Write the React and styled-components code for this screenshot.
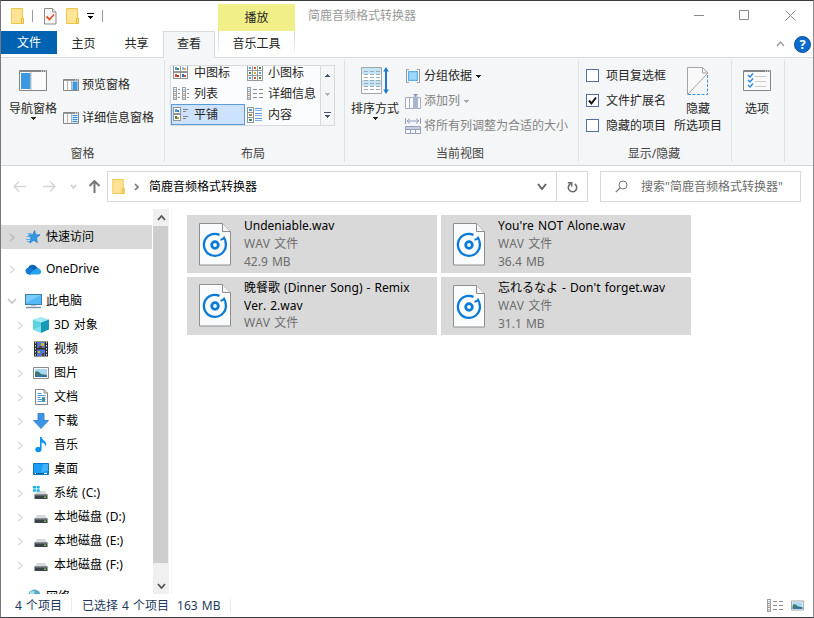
import React from "react";
import styled, { createGlobalStyle } from "styled-components";

const GlobalStyle = createGlobalStyle`
  * {
    box-sizing: border-box;
  }
  body {
    margin: 0;
    overflow: hidden;
    font-family: "Noto Sans", "Noto Sans CJK SC", sans-serif;
    font-size: 12px;
    line-height: 16px;
    font-kerning: none;
    word-spacing: 1px;
    color: #000;
  }
  svg {
    display: block;
    flex: none;
  }
`;

const Window = styled.div`
  display: flex;
  flex-direction: column;
  width: 814px;
  height: 618px;
  background: #fff;
  border: 1px solid;
  border-color: #3c3c42 #8c8c90 #3a3d42 #77787c;
  white-space: nowrap;
`;

/* ---------- header ---------- */

const Header = styled.div`
  display: flex;
  height: 57px;
  flex: none;
  border-bottom: 1px solid #dadbdc;
  background: #fff;
`;

const HeaderLeft = styled.div`
  width: 217px;
`;

const QuickAccess = styled.div`
  display: flex;
  align-items: center;
  height: 30px;
  padding-left: 10px;
`;

const QuickDivider = styled.div`
  width: 1px;
  height: 12px;
  background: #9b9b9b;
  margin: 0 ${(props) => props.$right}px 0 ${(props) => props.$left}px;
`;

const Gap = styled.div`
  width: ${(props) => props.$w}px;
  flex: none;
`;

const Tabs = styled.div`
  display: flex;
`;

const FileTab = styled.div`
  width: 56px;
  height: 23px;
  background: #0063b1;
  color: #fff;
  text-align: center;
  line-height: 23px;
`;

const Tab = styled.div`
  width: 53px;
  height: 26px;
  line-height: 26px;
  text-align: center;
  color: #262626;
`;

const ActiveTab = styled(Tab)`
  width: 52px;
  height: 27px;
  line-height: 24px;
  background: #f5f6f7;
  border: 1px solid #dadbdc;
  border-bottom: none;
`;

const ContextTab = styled.div`
  width: 77px;
  padding-top: 3px;
  text-align: center;
  color: #262626;
`;

const ContextTitle = styled.div`
  height: 27px;
  line-height: 28px;
  background: #f1ef87;
`;

const ContextName = styled.div`
  height: 21px;
  line-height: 26px;
  border: 1px solid;
  border-width: 0 1px;
  border-image: linear-gradient(#d0d0d0, #f4f4f4) 1;
`;

const HeaderRight = styled.div`
  flex: 1;
`;

const TitleRow = styled.div`
  display: flex;
  align-items: center;
  height: 29px;
  padding-left: 13px;
  padding-right: 17px;
  color: #999;
`;

const Controls = styled.div`
  display: flex;
  gap: 35px;
  margin-left: auto;
`;

const HelpRow = styled.div`
  display: flex;
  justify-content: flex-end;
  align-items: center;
  gap: 9px;
  height: 28px;
  padding-right: 2px;
`;

const Help = styled.div`
  width: 17px;
  height: 17px;
  border-radius: 50%;
  border: 1px solid #14508c;
  background: #0a6cce;
  color: #fff;
  font-weight: 700;
  font-size: 13px;
  line-height: 15px;
  text-align: center;
`;

/* ---------- ribbon ---------- */

const Ribbon = styled.div`
  display: flex;
  flex: none;
  height: 108px;
  padding: 2px 0 3px;
  background: #f5f6f7;
  border-bottom: 1px solid #d5d6d7;
`;

const Group = styled.div`
  display: flex;
  flex-direction: column;
  width: ${(props) => props.$w}px;
  border-right: 1px solid #e1e2e3;
`;

const GroupBody = styled.div`
  display: flex;
  flex: none;
  height: 86px;
  padding-left: ${(props) => props.$left}px;
`;

const GroupLabel = styled.div`
  text-align: center;
  color: #444;
  padding-right: ${(props) => props.$shift || 0}px;
`;

const BigButton = styled.div`
  display: flex;
  flex-direction: column;
  align-items: center;
  width: 48px;
  padding-top: 6px;
  color: #262626;
`;

const BigIcon = styled.div`
  display: flex;
  align-items: center;
  height: 29px;
  margin-bottom: 5px;
`;

const BigLabel = styled.div`
  line-height: 17px;
  text-align: center;
`;

const Stack = styled.div`
  display: flex;
  flex-direction: column;
  gap: ${(props) => props.$gap}px;
  padding-top: ${(props) => props.$top}px;
  margin-left: ${(props) => props.$left || 0}px;
`;

const SmallButton = styled.div`
  display: flex;
  align-items: center;
  gap: ${(props) => props.$gap || 3}px;
  height: 20px;
  color: ${(props) => (props.$disabled ? "#838383" : "#262626")};
`;

const CheckRow = styled.div`
  display: flex;
  align-items: center;
  gap: 7px;
  height: 20px;
  color: #262626;
`;

const Box = styled.div`
  width: 13px;
  height: 13px;
  margin-bottom: 1px;
  background: #fff;
  border: 1px solid #4f6fa5;
`;

const Gallery = styled.div`
  display: flex;
  width: 165px;
  height: 61px;
  margin-top: 5px;
  border: 1px solid #d9dadb;
  background: #fbfcfd;
  overflow: hidden;
`;

const GalleryGrid = styled.div`
  display: grid;
  grid-template-columns: 74px 75px;
  grid-auto-rows: 21px;
  margin-top: -4px;
  width: 149px;
`;

const GalleryItem = styled.div`
  display: flex;
  align-items: center;
  gap: 5px;
  padding-left: ${(props) => (props.$selected ? 1 : 2)}px;
  color: #262626;
  ${(props) =>
    props.$selected &&
    `
    background: #cde2fc;
    border: 1px solid #5a9bdc;
  `}
`;

const GalleryIcon = styled.div`
  width: 16px;
`;

const GalleryScroll = styled.div`
  display: flex;
  flex-direction: column;
  justify-content: space-between;
  align-items: center;
  width: 14px;
  padding: 8px 0 7px;
  border-left: 1px solid #d9dadb;
  background: #f5f6f7;
`;

/* ---------- address bar ---------- */

const NavBar = styled.div`
  display: flex;
  flex: none;
  height: 43px;
  padding: 5px 12px 7px 12px;
`;

const NavButtons = styled.div`
  display: flex;
  align-items: center;
  width: 94px;
`;

const Address = styled.div`
  display: flex;
  align-items: center;
  width: 450px;
  border: 1px solid #d9d9d9;
  padding: 0 9px 0 4px;
`;

const Refresh = styled.div`
  display: flex;
  align-items: center;
  justify-content: center;
  width: 31px;
  border: 1px solid #d9d9d9;
  border-left: none;
`;

const Search = styled.div`
  display: flex;
  align-items: center;
  gap: 13px;
  width: 201px;
  margin-left: 12px;
  padding-left: 14px;
  border: 1px solid #d9d9d9;
  color: #6d6d6d;
`;

/* ---------- body ---------- */

const Body = styled.div`
  display: flex;
  height: 385px;
  flex: none;
`;

const Tree = styled.div`
  width: 152px;
  height: 385px;
  padding-top: 16px;
  overflow: hidden;
`;

const TreeRow = styled.div`
  display: flex;
  align-items: center;
  width: 151px;
  height: 24px;
  margin-bottom: ${(props) => (props.$root ? 8 : 0)}px;
  margin-top: ${(props) => (props.$last ? 8 : 0)}px;
  padding-left: ${(props) => (props.$child ? 14 : 6)}px;
  background: ${(props) => (props.$selected ? "#d9d9d9" : "transparent")};
`;

const TreeIcon = styled.div`
  display: flex;
  justify-content: center;
  align-items: center;
  width: 16px;
  height: 18px;
  margin: 0 5px 0 8px;
`;

const ScrollBar = styled.div`
  width: 16px;
  background: #f0f0f0;
  display: flex;
  flex-direction: column;
  align-items: center;
  padding: 6px 0 5px;
`;

const Thumb = styled.div`
  width: 15px;
  height: 337px;
  margin: 5px 1px auto 0;
  background: #cdcdcd;
`;

const Files = styled.div`
  flex: 1;
  display: grid;
  grid-template-columns: 250px 250px;
  grid-auto-rows: 58px;
  gap: 4px;
  margin-left: 2px;
  padding: 6px 0 0 15px;
  border-left: 1px solid #f3f3f3;
`;

const Tile = styled.div`
  display: flex;
  gap: 13px;
  padding-left: 12px;
  background: #d9d9d9;
`;

const TileIcon = styled.div`
  padding-top: ${(props) => props.$top}px;
`;

const TileText = styled.div`
  width: 182px;
  padding-top: 2px;
  line-height: 18px;
  color: #6d6d6d;
  white-space: normal;
`;

const FileName = styled.div`
  color: #000;
  line-height: 17.500px;
`;

const Status = styled.div`
  display: flex;
  align-items: center;
  flex: 1;
  padding: 0 9px 0 14px;
  color: #1e395b;
`;

const StatusDivider = styled.div`
  width: 1px;
  height: 14px;
  background: #ececec;
  margin: 0 10px 0 9px;
`;

const StatusIcons = styled.div`
  display: flex;
  align-items: center;
  gap: 8px;
  margin-left: auto;
`;

/* ---------- icons ---------- */

const Folder = ({ w = 13, h = 17 }) => (
  <svg width={w} height={h} viewBox="0 0 13 17">
    <path d="M.5.5h11v9.500h1v5h-1.500v.5H.5z" fill="#ffe394" stroke="#eec64c" />
    <path d="M10.500 15.500v-5h2v5z" fill="#ffe394" stroke="#e8ba36" />
  </svg>
);

const CheckDoc = () => (
  <svg width="13" height="17" viewBox="0 0 13 17">
    <path d="M.5.5h8l3.500 3.500v12H.5z" fill="#f7f7f7" stroke="#8a8a8a" />
    <path d="M8.500.5v3.500h3.500" fill="#ddd" stroke="#9a9a9a" />
    <path d="M2.500 8.500l3 3 4.500-5" fill="none" stroke="#e5532a" strokeWidth="1.800" />
  </svg>
);

const Down = ({ color = "#222", line }) => (
  <svg width="7" height={line ? 6 : 3} viewBox={line ? "0 -3 7 6" : "0 0 7 3"} shapeRendering="crispEdges">
    {line && <path d="M0-3h7v1H0z" fill={color} />}
    <path d="M1 0h5v1H5v1H4v1H3V2H2V1H1z" fill={color} />
  </svg>
);

const Up = ({ color }) => (
  <svg width="5" height="3" viewBox="0 0 5 3" shapeRendering="crispEdges">
    <path d="M2 0h1v1h1v1h1v1H0V2h1V1h1z" fill={color} />
  </svg>
);

const Chevron = ({ w, h, color, dir = "right", sw = 1.6 }) => {
  const d = {
    right: `M1 1L${w - 1} ${h / 2}L1 ${h - 1}`,
    down: `M1 1L${w / 2} ${h - 1}L${w - 1} 1`,
    up: `M1 ${h - 1}L${w / 2} 1L${w - 1} ${h - 1}`,
  }[dir];
  return (
    <svg width={w} height={h}>
      <path d={d} fill="none" stroke={color} strokeWidth={sw} />
    </svg>
  );
};

const NavPane = () => (
  <svg width="28" height="21" viewBox="0 0 28 21">
    <path d="M.5.5h27v20H.5z" fill="#fafafa" stroke="#858585" />
    <path d="M1 1h26v1H1z" fill="#858585" />
    <path d="M22 1h1M24 1h1M26 1h1" stroke="#fff" />
    <path d="M2 3h9.500v16H2z" fill="#3c98e0" />
    <path d="M12 2v18" stroke="#9a9a9a" strokeWidth=".6" />
  </svg>
);

const SidePane = ({ lines }) => (
  <svg width="16" height="12" viewBox="0 0 16 12">
    <path d="M.5.5h15v11H.5z" fill="#fafafa" stroke="#858585" />
    <path d="M1 1h14v.8H1z" fill="#858585" />
    <path d="M12 1h1M14 1h1" stroke="#fff" />
    <path d="M4.500 2v9M8.500 2v9" stroke="#b5b5b5" />
    <path d="M9.500 2.500h5V11h-5z" fill={lines ? "#cfe6fa" : "#3c98e0"} />
    {lines && <path d="M9.500 3.500h5M9.500 5.500h5M9.500 7.500h5M9.500 9.500h5" stroke="#3c8fdc" />}
  </svg>
);

const cell = (x, y, c1, c2) => (
  <g key={`${x}-${y}`}>
    <rect x={x + 0.5} y={y + 0.5} width="7" height="6" fill="#fff" stroke="#949494" />
    <rect x={x + 2} y={y + 2} width="2" height="3" fill={c1} />
    <rect x={x + 4} y={y + 3} width="2" height="2" fill={c2} />
  </g>
);

const MediumIcons = () => (
  <svg width="15" height="15" viewBox="0 0 15 15">
    {cell(0, 0, "#4d9de0", "#3f7f4a")}
    {cell(7, 0, "#8fb8e0", "#e0ab3a")}
    {cell(0, 7, "#d9502f", "#a13a2a")}
    {cell(7, 7, "#2a6fc0", "#d0453a")}
  </svg>
);

const dots = ["#4d9de0", "#d9502f", "#3f8f4a", "#e0ab3a"];

const SmallIcons = () => (
  <svg width="16" height="16" viewBox="0 0 16 16">
    {[0, 5, 10].map((y, j) =>
      [0, 5, 10].map((x, i) => (
        <g key={`${x}-${y}`}>
          <rect x={x + 0.5} y={y + 0.5} width="5" height="5" fill="#fff" stroke="#9a9a9a" />
          <rect x={x + 2} y={y + 2} width="2" height="2" fill={dots[(i + j * 2) % 4]} />
        </g>
      ))
    )}
  </svg>
);

const ListColumn = ({ x, long }) => (
  <g>
    {[0, 4, 8].map((y, i) => (
      <g key={y}>
        <rect x={x + 0.5} y={y + 0.5} width="3" height="4" fill="#fff" stroke="#a0a0a0" />
        <rect x={x + 1.5} y={y + 2} width="1" height="1.500" fill={dots[i]} />
        <path
          d={long ? `M6 ${y + 2.5}h4M12 ${y + 2.5}h4` : `M${x + 5} ${y + 2.5}h2`}
          stroke="#8a8a8a"
        />
      </g>
    ))}
  </g>
);

const ListIcon = () => (
  <svg width="16" height="13" viewBox="0 0 16 13">
    <ListColumn x={0} />
    <ListColumn x={9} />
  </svg>
);

const DetailsIcon = () => (
  <svg width="16" height="13" viewBox="0 0 16 13">
    <ListColumn x={0} long />
  </svg>
);

const TilesIcon = () => (
  <svg width="16" height="15" viewBox="0 0 16 15">
    {cell(0, 0, "#4d9de0", "#2f7fc4")}
    {cell(0, 7, "#3f8f4a", "#e08a3a")}
    <path d="M10 2.500h5M10 4.500h3M10 9.500h5M10 11.500h3" stroke="#858585" />
  </svg>
);

const ContentIcon = () => (
  <svg width="16" height="16" viewBox="0 0 16 16">
    {[0, 5, 10].map((y, i) => (
      <g key={y}>
        <rect x=".5" y={y + 0.5} width="6" height="5" fill="#fff" stroke="#949494" />
        <rect x="2" y={y + 2} width="3" height="2" fill={["#4d9de0", "#a08a3a", "#3f8f6a"][i]} />
      </g>
    ))}
    <path d="M8 1.500h7M8 6.500h7M8 11.500h7" stroke="#5d9bf0" />
    <path d="M8 3.500h7M8 8.500h7M8 13.500h7" stroke="#85aef0" />
  </svg>
);

const SortIcon = () => (
  <svg width="28" height="28" viewBox="0 0 28 28">
    <path d="M.5.5h20v26H.5z" fill="#fff" stroke="#a5a5a5" />
    <path d="M1 1h19v6H1zM1 13h19v6H1z" fill="#c3e5f8" />
    {[4, 7, 10, 13, 16, 19, 22].map((y) => (
      <path key={y} d={`M3 ${y + 0.5}h4M9 ${y + 0.5}h4M15 ${y + 0.5}h4`} stroke="#a3a9ad" />
    ))}
    <path d="M25 2v23" stroke="#1f7ac8" strokeWidth="2" />
    <path d="M22.200 4.500L25 0l2.800 4.500zM22.200 22.500L25 27l2.800-4.500z" fill="#1f7ac8" />
  </svg>
);

const GroupIcon = () => (
  <svg width="16" height="14" viewBox="0 0 16 14">
    <path d="M4 .5H1.500v13H4M12 .5h2.500v13H12" fill="none" stroke="#9b9b9b" />
    <rect x="3.500" y="2.500" width="9" height="9" fill="#8ccdf5" stroke="#5db1ea" />
    <rect x="5" y="4" width="6" height="6" fill="#9fd8fa" />
  </svg>
);

const AddColumnIcon = () => (
  <svg width="16" height="15" viewBox="0 0 16 15">
    <path d="M.5 3.500h15v11H.5z" fill="#fafcff" stroke="#a3abc3" />
    <path d="M4.500 3.500v11" stroke="#a3abc3" />
    <path d="M8 2.500h5V15H8z" fill="#a9b4cf" />
    <path d="M8 0h5l-2.500 3z" fill="#8996b8" />
  </svg>
);

const FitIcon = () => (
  <svg width="16" height="16" viewBox="0 0 16 16">
    <path d="M.5 0v6M15.500 0v6M2 3h12M5 .5L2 3l3 2.500M11 .5L14 3l-3 2.500" fill="none" stroke="#929cba" />
    <path d="M1 9h14v2H1z" fill="#c5cee3" />
    <path d="M.5 8.500h15v7H.5zM5.500 11.500v4M10.500 11.500v4M.5 11.500h15" fill="none" stroke="#98a2be" />
  </svg>
);

const HideIcon = () => (
  <svg width="22" height="28" viewBox="0 0 22 28">
    <path d="M.5 27.500V.5h15l6 6z" fill="#f9f9f9" />
    <path d="M.5 27.500V.5h15l5.500 5.500L.5 27.500M15.500.5V6H21" fill="none" stroke="#a3a3a3" />
    <path d="M20.500 8v19.500H1" fill="none" stroke="#3d95e0" strokeDasharray="3 1.500" />
  </svg>
);

const OptionsIcon = () => (
  <svg width="28" height="21" viewBox="0 0 28 21">
    <path d="M.5.5h27v20H.5z" fill="#fafafa" stroke="#858585" />
    <path d="M1 1h26v1H1z" fill="#858585" />
    <path d="M22 1h1M24 1h1M26 1h1" stroke="#fff" />
    {[5, 10, 15].map((y) => (
      <g key={y}>
        <path d={`M5 ${y}l2 2 3-3.500`} fill="none" stroke="#2f8be0" strokeWidth="1.500" />
        <path d={`M12 ${y + 1.5}h11`} stroke="#c9c9c9" />
      </g>
    ))}
  </svg>
);

const Arrow = ({ dir, color }) => (
  <svg width="13" height="13" viewBox="0 0 13 13">
    <g transform={`rotate(${{ left: 0, up: 90, right: 180 }[dir]} 6.5 6.5)`}>
      <path d="M6 1.500l-5 5 5 5M1 6.500h12" fill="none" stroke={color} strokeWidth={dir === "up" ? 2 : 1.4} />
    </g>
  </svg>
);

const RefreshIcon = () => (
  <svg width="11" height="12" viewBox="0 0 11 12">
    <path d="M7.800 3A4.200 4.200 0 1 1 2.800 3.300L4.300 2" fill="none" stroke="#6a6a6a" strokeWidth="1.600" />
    <path d="M.8 1.700H4.700V5.400" fill="none" stroke="#6a6a6a" strokeWidth="1.500" />
  </svg>
);

const SearchIcon = () => (
  <svg width="13" height="13" viewBox="0 0 13 13">
    <circle cx="8" cy="5" r="4" fill="none" stroke="#777" />
    <path d="M5 8L.8 12.200" stroke="#777" strokeWidth="1.200" />
  </svg>
);

const MediaFile = () => (
  <svg width="32" height="43" viewBox="0 0 32 43">
    <path d="M.5.5h23l8 8v33.500H.5z" fill="#f9fbfc" stroke="#8e8e8e" />
    <path d="M23.500.5v8h8" fill="#f2f2f2" stroke="#8e8e8e" />
    <path d="M20.500 11.900A11 11 0 1 0 26.500 19" fill="none" stroke="#0a7ad8" strokeWidth="2.300" />
    <circle cx="16" cy="22" r="3.300" fill="none" stroke="#0a7ad8" strokeWidth="2.800" />
    <path d="M21.500 16.800q2.600-.3 3.600-2 1.200 2 1.600 4.800" fill="none" stroke="#0a7ad8" strokeWidth="2" />
  </svg>
);

const Star = () => (
  <svg width="16" height="14" viewBox="0 0 16 14">
    <path d="M9.500.5l1.200 4.200 4.300.1-3.500 3 .8 4.700-3.600-2.200L4.800 13l1.100-4.700L3.500 5l4.300-.3z" fill="#2e9ae6" stroke="#1c76c8" strokeWidth=".7" />
    <path d="M2.500 3.500h4M1.500 6.500h4M1 9.500h4M2 11.500h3" stroke="#52b4f2" />
  </svg>
);

const Cloud = () => (
  <svg width="17" height="11" viewBox="0 0 17 11">
    <path d="M4 10.500A3.600 3.600 0 0 1 2.800 4 5 5 0 0 1 11.700 3L14 5l-9 5.500z" fill="#0a64b8" />
    <path d="M4 10.500a3.600 3.600 0 0 1-2.500-6q3-1.500 5.500 0l6 5z" fill="#1478d4" />
    <path d="M4 10.500l6-5.300Q13.500 3 15.500 5.800a2.900 2.900 0 0 1-1.500 4.700z" fill="#2aa3ee" />
  </svg>
);

const Computer = () => (
  <svg width="17" height="15" viewBox="0 0 17 15">
    <rect x=".5" y=".5" width="16" height="10" fill="#55b9f7" stroke="#397faa" />
    <path d="M1 1h15L1 9z" fill="#8ad3fb" opacity=".7" />
    <path d="M6 11.500h5" stroke="#bcc6ce" />
    <path d="M1 13.500h15" stroke="#7b92a6" strokeWidth="1.500" />
  </svg>
);

const Cube = () => (
  <svg width="16" height="16" viewBox="0 0 16 16">
    <path d="M8 0l8 2.500L8 5.500 0 2.500z" fill="#a2eaf2" />
    <path d="M0 2.500l8 3V16l-8-3.500z" fill="#5bd3e2" />
    <path d="M16 2.500l-8 3V16l8-3.500z" fill="#1699b5" />
    <path d="M0 12.500L8 9v7z" fill="#8ae6ef" opacity=".7" />
  </svg>
);

const Film = () => (
  <svg width="14" height="16" viewBox="0 0 14 16">
    <path d="M0 .5h14v15H0z" fill="#2b2b2b" />
    <path d="M1.500 1v14M12.500 1v14" stroke="#ddd" strokeDasharray="1.500 1.500" />
    <path d="M3 1h8v6H3zM3 8.500h8V15H3z" fill="#4a79d8" />
    <path d="M7 2h3v3H7zM4 10h2v2H4z" fill="#d8b42c" />
    <path d="M5 5h3v2H5zM8 12h2v3H8z" fill="#6b3a38" />
  </svg>
);

const Picture = ({ w = 16, h = 12 }) => (
  <svg width={w} height={h} viewBox="0 0 16 12">
    <path d="M.5.5h15v11H.5z" fill="#fff" stroke="#8c8c8c" />
    <path d="M2 2h12v8H2z" fill="#a7d7f5" />
    <path d="M2 5q3-2 6 2l6 1v2H2z" fill="#3f7a72" />
    <path d="M2 8.500h12V10H2z" fill="#2e6fae" />
  </svg>
);

const Doc = () => (
  <svg width="13" height="16" viewBox="0 0 13 16">
    <path d="M.5.5h8.500L12.500 4v11.500H.5z" fill="#fff" stroke="#858585" />
    <path d="M9 .5V4h3.500" fill="none" stroke="#858585" />
    <path d="M2.500 4.500h4M2.500 6.500h8M2.500 8.500h3M7 8.500h3.500M2.500 10.500h8M2.500 12.500h8" stroke="#4d9bd9" />
    <path d="M7 9h3v3H7z" fill="#4d8f8a" />
  </svg>
);

const Download = () => (
  <svg width="16" height="16" viewBox="0 0 16 16">
    <path d="M5 .5h6v7h4.500L8 15.500.5 7.500H5z" fill="#3c94e4" stroke="#2a78c8" strokeWidth=".8" />
  </svg>
);

const Note = () => (
  <svg width="12" height="16" viewBox="0 0 12 16">
    <path d="M5 0h1.600q.4 2.500 2.600 3.700 3.200 2.300 1.300 6.300.3-3.500-3.900-4.500v7.300a3.200 2.700 0 1 1-1.600-2.600z" fill="#0e94ec" />
  </svg>
);

const Desktop = () => (
  <svg width="16" height="12" viewBox="0 0 16 12">
    <path d="M.5.5h15v11H.5z" fill="#1b9df5" stroke="#0f76c6" />
    <path d="M10 1h5v6L8 10z" fill="#43b4fb" />
    <path d="M1 10.500h14" stroke="#0b5f9f" />
    <path d="M2 10.500h1M11 10.500h3" stroke="#fff" />
  </svg>
);

const Drive = ({ system }) => (
  <svg width="16" height="14" viewBox="0 0 16 14">
    <path d="M4 5h8l2.500 4h-13z" fill="#d5d8dc" />
    <path d="M1.500 8.500h13v4.500h-13z" fill="#3e4145" />
    <path d="M1.500 8.500h13v1h-13z" fill="#8b8e92" />
    <rect x="11" y="10.500" width="2" height="1.300" fill="#5ade62" />
    {system && <path d="M0 0h3v2.500H0zM3.700 0h3v2.500h-3zM0 3.200h3v2.500H0zM3.700 3.200h3v2.500h-3z" fill="#16b2f2" />}
  </svg>
);

const Network = () => (
  <svg width="16" height="16" viewBox="0 0 16 16">
    <circle cx="9.500" cy="6.500" r="6" fill="#57a9cc" />
    <path d="M5 3q3-2 5 0l-2 3-3 1z" fill="#a9dcea" />
    <path d="M1 7h8v6H1z" fill="#3b97d8" />
  </svg>
);

/* ---------- data ---------- */

const layouts = [
  { name: "中图标", icon: <MediumIcons /> },
  { name: "小图标", icon: <SmallIcons /> },
  { name: "列表", icon: <ListIcon /> },
  { name: "详细信息", icon: <DetailsIcon /> },
  { name: "平铺", icon: <TilesIcon />, selected: true },
  { name: "内容", icon: <ContentIcon /> },
];

const checks = [
  { name: "项目复选框" },
  { name: "文件扩展名", checked: true },
  { name: "隐藏的项目" },
];

const tree = [
  { name: "快速访问", icon: <Star />, root: true, selected: true },
  { name: "OneDrive", icon: <Cloud />, root: true },
  { name: "此电脑", icon: <Computer />, open: true },
  { name: "3D 对象", icon: <Cube />, child: true },
  { name: "视频", icon: <Film />, child: true },
  { name: "图片", icon: <Picture />, child: true },
  { name: "文档", icon: <Doc />, child: true },
  { name: "下载", icon: <Download />, child: true },
  { name: "音乐", icon: <Note />, child: true },
  { name: "桌面", icon: <Desktop />, child: true },
  { name: "系统 (C:)", icon: <Drive system />, child: true },
  { name: "本地磁盘 (D:)", icon: <Drive />, child: true },
  { name: "本地磁盘 (E:)", icon: <Drive />, child: true },
  { name: "本地磁盘 (F:)", icon: <Drive />, child: true },
  { name: "网络", icon: <Network />, last: true },
];

const files = [
  { name: "Undeniable.wav", size: "42.9 MB", top: 8 },
  { name: "You're NOT Alone.wav", size: "36.4 MB", top: 8 },
  { name: "晚餐歌 (Dinner Song) - Remix Ver. 2.wav", top: 7 },
  { name: "忘れるなよ - Don't forget.wav", size: "31.1 MB", top: 8 },
];

const App = () => {
  return (
    <Window>
      <GlobalStyle />
      <Header>
        <HeaderLeft>
          <QuickAccess>
            <Folder />
            <QuickDivider $left={8} $right={11} />
            <CheckDoc />
            <Gap $w={9} />
            <Folder />
            <Gap $w={8} />
            <Down color="#000" line />
            <QuickDivider $left={8} $right={0} />
          </QuickAccess>
          <Tabs>
            <FileTab>文件</FileTab>
            <Tab>主页</Tab>
            <Tab>共享</Tab>
            <ActiveTab>查看</ActiveTab>
          </Tabs>
        </HeaderLeft>
        <ContextTab>
          <ContextTitle>播放</ContextTitle>
          <ContextName>音乐工具</ContextName>
        </ContextTab>
        <HeaderRight>
          <TitleRow>
            简鹿音频格式转换器
            <Controls>
              <svg width="11" height="11">
                <path d="M1 5.500h10" stroke="#8a8a8a" />
              </svg>
              <svg width="11" height="11">
                <path d="M.5.5h9v9h-9z" fill="none" stroke="#8a8a8a" />
              </svg>
              <svg width="11" height="11">
                <path d="M.5.5l10 10M10.500.5l-10 10" stroke="#8a8a8a" />
              </svg>
            </Controls>
          </TitleRow>
          <HelpRow>
            <Chevron w={9} h={6} color="#999" dir="up" sw={1.3} />
            <Help>?</Help>
          </HelpRow>
        </HeaderRight>
      </Header>

      <Ribbon>
        <Group $w={164}>
          <GroupBody $left={8}>
            <BigButton>
              <BigIcon><NavPane /></BigIcon>
              <BigLabel>导航窗格</BigLabel>
              <Down />
            </BigButton>
            <Stack $gap={13} $top={15} $left={6}>
              <SmallButton><SidePane />预览窗格</SmallButton>
              <SmallButton><SidePane lines />详细信息窗格</SmallButton>
            </Stack>
          </GroupBody>
          <GroupLabel>窗格</GroupLabel>
        </Group>

        <Group $w={180}>
          <GroupBody $left={5}>
            <Gallery>
              <GalleryGrid>
                {layouts.map((item) => (
                  <GalleryItem key={item.name} $selected={item.selected}>
                    <GalleryIcon>{item.icon}</GalleryIcon>
                    {item.name}
                  </GalleryItem>
                ))}
              </GalleryGrid>
              <GalleryScroll>
                <Up color="#44546f" />
                <Down color="#b0b6c0" />
                <Down color="#44546f" line />
              </GalleryScroll>
            </Gallery>
          </GroupBody>
          <GroupLabel $shift={3}>布局</GroupLabel>
        </Group>

        <Group $w={234}>
          <GroupBody $left={6}>
            <BigButton>
              <BigIcon><SortIcon /></BigIcon>
              <BigLabel>排序方式</BigLabel>
              <Down />
            </BigButton>
            <Stack $gap={5} $top={6} $left={6}>
              <SmallButton><GroupIcon />分组依据<Down /></SmallButton>
              <SmallButton $disabled><AddColumnIcon />添加列<Down color="#a8a8a8" /></SmallButton>
              <SmallButton $disabled><FitIcon />将所有列调整为合适的大小</SmallButton>
            </Stack>
          </GroupBody>
          <GroupLabel $shift={3}>当前视图</GroupLabel>
        </Group>

        <Group $w={153}>
          <GroupBody $left={7}>
            <Stack $gap={5} $top={6}>
              {checks.map((item) => (
                <CheckRow key={item.name}>
                  <Box>
                    {item.checked && (
                      <svg width="11" height="11">
                        <path d="M2 5.500l2.500 3L9 2.500" fill="none" stroke="#111" strokeWidth="2" />
                      </svg>
                    )}
                  </Box>
                  {item.name}
                </CheckRow>
              ))}
            </Stack>
            <Gap $w={8} />
            <BigButton>
              <BigIcon><HideIcon /></BigIcon>
              <BigLabel>隐藏<br />所选项目</BigLabel>
            </BigButton>
          </GroupBody>
          <GroupLabel $shift={2}>显示/隐藏</GroupLabel>
        </Group>

        <Group $w={53}>
          <GroupBody $left={1}>
            <BigButton>
              <BigIcon><OptionsIcon /></BigIcon>
              <BigLabel>选项</BigLabel>
            </BigButton>
          </GroupBody>
        </Group>
      </Ribbon>

      <NavBar>
        <NavButtons>
          <Arrow dir="left" color="#d5d5d5" />
          <Gap $w={17} />
          <Arrow dir="right" color="#d5d5d5" />
          <Gap $w={14} />
          <Chevron w={7} h={5} color="#cfcfcf" dir="down" />
          <Gap $w={11} />
          <Arrow dir="up" color="#777" />
        </NavButtons>
        <Address>
          <Folder w={13} h={16} />
          <Gap $w={9} />
          <Chevron w={5} h={8} color="#777" />
          <Gap $w={10} />
          简鹿音频格式转换器
          <Gap $w={280} />
          <Chevron w={10} h={7} color="#666" dir="down" sw={2} />
        </Address>
        <Refresh><RefreshIcon /></Refresh>
        <Search>
          <SearchIcon />
          搜索"简鹿音频格式转换器"
        </Search>
      </NavBar>

      <Body>
        <Tree>
          {tree.map((item) => (
            <TreeRow
              key={item.name}
              $root={item.root}
              $child={item.child}
              $selected={item.selected}
              $last={item.last}
            >
              {item.open ? (
                <Chevron w={10} h={6} color="#c4c4c4" dir="down" />
              ) : (
                <>
                  <Gap $w={2} />
                  <Chevron w={6} h={9} color={item.selected ? "#bcbcbc" : "#dcdcdc"} />
                  <Gap $w={2} />
                </>
              )}
              <TreeIcon>{item.icon}</TreeIcon>
              {item.name}
            </TreeRow>
          ))}
        </Tree>
        <ScrollBar>
          <Chevron w={9} h={6} color="#555" dir="up" sw={1.8} />
          <Thumb />
          <Chevron w={9} h={6} color="#555" dir="down" sw={1.8} />
        </ScrollBar>
        <Files>
          {files.map((file) => (
            <Tile key={file.name}>
              <TileIcon $top={file.top}><MediaFile /></TileIcon>
              <TileText>
                <FileName>{file.name}</FileName>
                <div>WAV 文件</div>
                {file.size && <div>{file.size}</div>}
              </TileText>
            </Tile>
          ))}
        </Files>
      </Body>

      <Status>
        4 个项目
        <StatusDivider />
        已选择 4 个项目
        <Gap $w={8} />
        163 MB
        <StatusDivider />
        <StatusIcons>
          <DetailsIcon />
          <Picture w={13} h={11} />
        </StatusIcons>
      </Status>
    </Window>
  );
};

export default App;
